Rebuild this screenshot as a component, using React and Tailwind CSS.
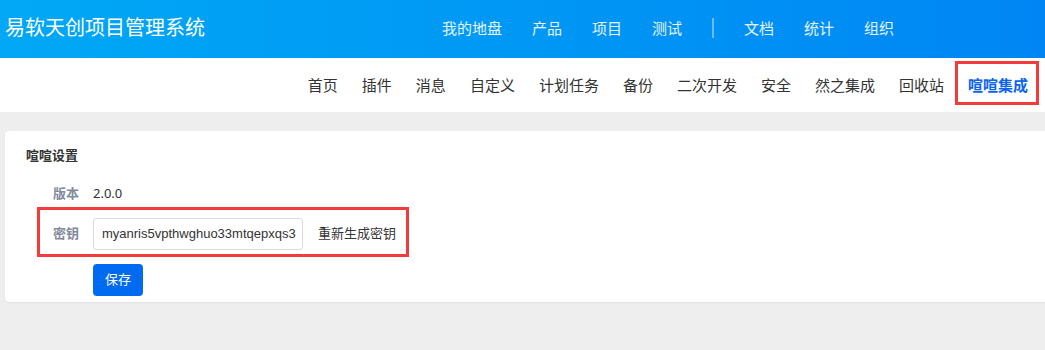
import React from "react";

const mainNav = ["我的地盘", "产品", "项目", "测试"];
const mainNav2 = ["文档", "统计", "组织"];
const subNav = ["首页", "插件", "消息", "自定义", "计划任务", "备份", "二次开发", "安全", "然之集成", "回收站"];

export default function App() {
  return (
    <div
      className="w-[1045px] h-[350px] bg-[#eeeeee] overflow-hidden"
      style={{ fontFamily: '"Noto Sans", "Noto Sans CJK SC", sans-serif' }}
    >
      {/* Header */}
      <div className="h-[58px] flex items-center bg-gradient-to-r from-[#02a8f5] to-[#0086f4] text-white">
        <div className="pl-[5px] text-[20px] leading-none w-[442px] -mt-[2px]">易软天创项目管理系统</div>
        <div className="flex items-center gap-[30px] text-[15px] leading-none text-white/90 -mt-[2px]">
          {mainNav.map((n) => (
            <span key={n}>{n}</span>
          ))}
          <span className="w-[2px] h-[20px] bg-white/40"></span>
          {mainNav2.map((n) => (
            <span key={n}>{n}</span>
          ))}
        </div>
      </div>

      {/* Sub nav */}
      <div className="h-[54px] bg-white flex items-center justify-end pr-[17px]">
        <div className="flex items-center gap-[24px] text-[15px] leading-none text-[#333]">
          {subNav.map((n) => (
            <span key={n}>{n}</span>
          ))}
          <span className="relative font-bold text-[#0c64eb]">
            喧喧集成
            <span className="absolute -left-[13px] -right-[11px] -top-[17px] -bottom-[12px] border-[3px] border-[#f33b3b]"></span>
          </span>
        </div>
      </div>

      {/* Content */}
      <div className="pt-[19px] pl-[5px]">
        <div className="bg-white rounded-l-[4px] h-[171px] pl-[21px] pt-[15px] shadow-[0_1px_2px_rgba(0,0,0,0.06)]">
          <div className="text-[13px] leading-[18px] font-bold text-[#333]">喧喧设置</div>

          <div className="flex items-center mt-[20px] h-[20px] text-[13px]">
            <span className="w-[53px] text-right font-bold text-[#838a9d]">版本</span>
            <span className="ml-[14px] text-[#333]">2.0.0</span>
          </div>

          <div className="relative flex items-center mt-[14px] h-[32px] text-[13px]">
            <span className="w-[53px] text-right font-bold text-[#838a9d]">密钥</span>
            <div className="ml-[14px] w-[210px] h-[32px] border border-[#dcdcdc] rounded-[3px] flex items-center pl-[8px] text-[#333] overflow-hidden whitespace-nowrap font-['Liberation_Sans',sans-serif]">
              myanris5vpthwghuo33mtqepxqs3
            </div>
            <span className="ml-[15px] text-[#333]">重新生成密钥</span>
            <span className="absolute left-[11px] w-[372px] -top-[11px] -bottom-[7px] border-[3px] border-[#f33b3b]"></span>
          </div>

          <div className="flex mt-[14px]">
            <button className="ml-[67px] h-[32px] px-[12px] rounded-[4px] bg-[#006af1] text-white text-[13px]">
              保存
            </button>
          </div>
        </div>
      </div>
    </div>
  );
}
